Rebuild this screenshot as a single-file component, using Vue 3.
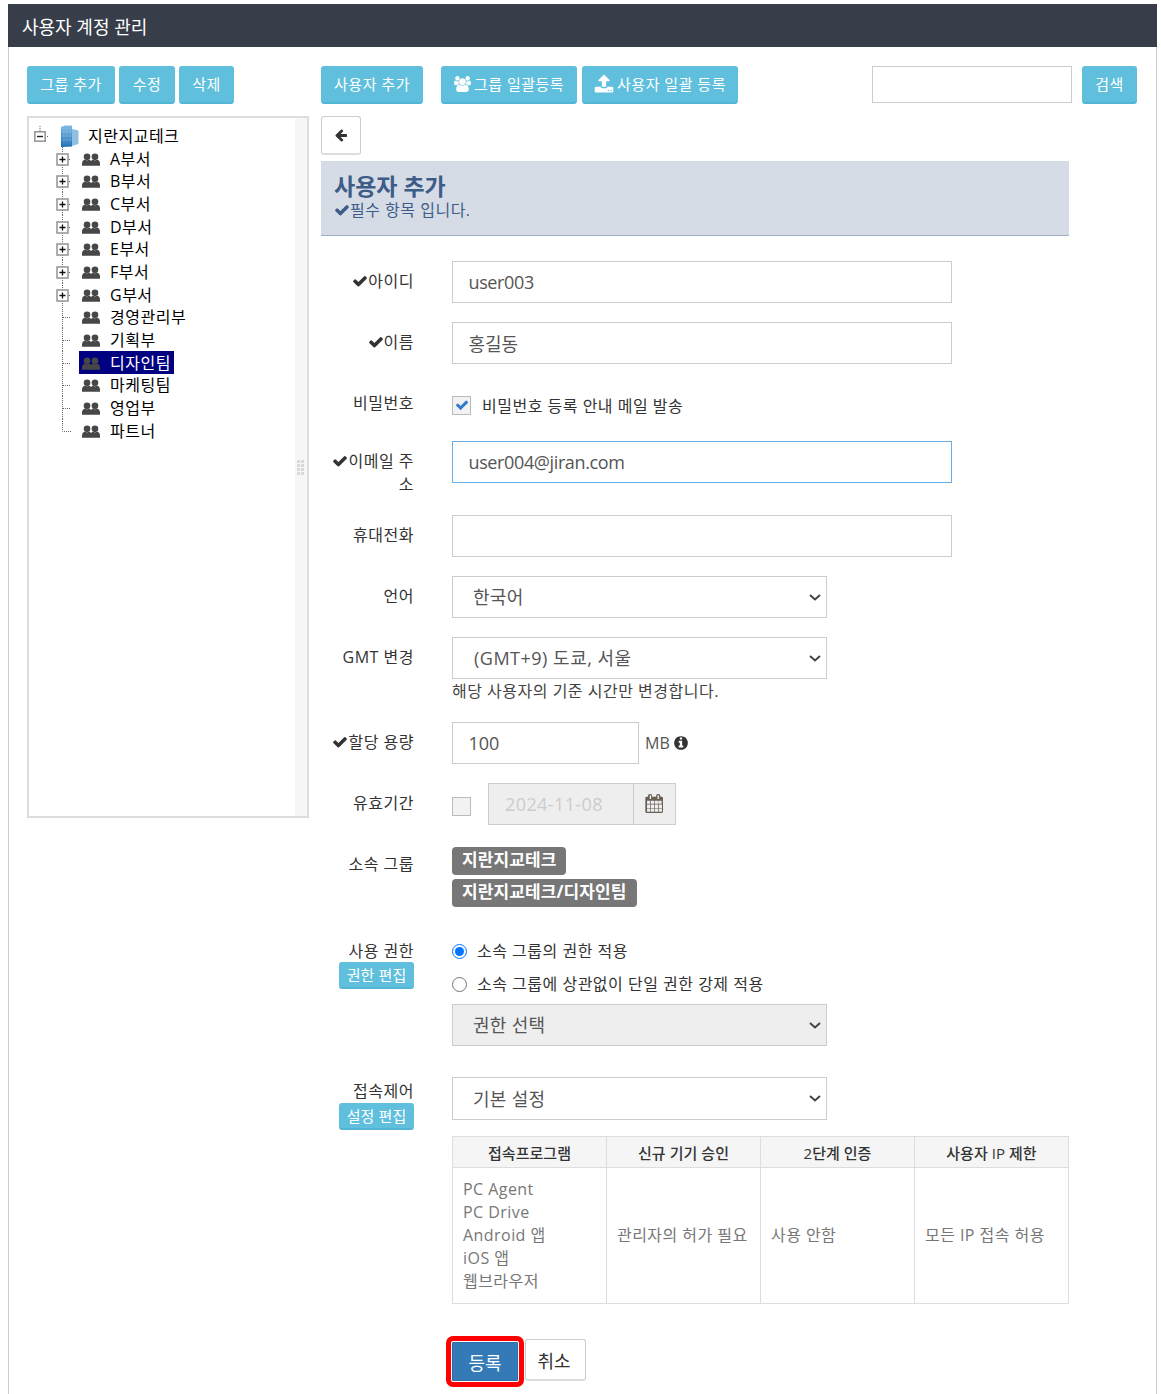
<script setup>
const depts = ['A부서','B부서','C부서','D부서','E부서','F부서','G부서','경영관리부','기획부','디자인팀','마케팅팀','영업부','파트너'].map((name, i) => ({
  name,
  branch: i < 7,
  selected: name === '디자인팀',
  last: name === '파트너'
}))
const check = 'M1671 566q0 40-28 68l-724 724-136 136q-28 28-68 28t-68-28l-136-136-362-362q-28-28-28-68t28-68l136-136q28-28 68-28t68 28l294 295 656-657q28-28 68-28t68 28l136 136q28 28 28 68z'
const users = 'M593 896q-162 5-265 128h-134q-82 0-138-40.5t-56-118.5q0-353 124-353 6 0 43.5 21t97.5 42.5 119 21.5q67 0 133-23-5 37-5 66 0 139 81 256zm1071 637q0 120-73 189.5t-194 69.5h-874q-121 0-194-69.5t-73-189.5q0-53 3.5-103.5t14-109 26.5-108.5 43-97.5 62-81 85.5-53.5 111.5-20q10 0 43 21.5t73 48 107 48 135 21.5 135-21.5 107-48 73-48 43-21.5q61 0 111.5 20t85.5 53.5 62 81 43 97.5 26.5 108.5 14 109 3.5 103.5zm-1024-1277q0 106-75 181t-181 75-181-75-75-181 75-181 181-75 181 75 75 181zm704 384q0 159-112.5 271.5t-271.5 112.5-271.5-112.5-112.5-271.5 112.5-271.5 271.5-112.5 271.5 112.5 112.5 271.5zm576 225q0 78-56 118.5t-138 40.5h-134q-103-123-265-128 81-117 81-256 0-29-5-66 66 23 133 23 59 0 119-21.5t97.5-42.5 43.5-21q124 0 124 353zm-128-609q0 106-75 181t-181 75-181-75-75-181 75-181 181-75 181 75 75 181z'
const upload = 'M1344 1472q0-26-19-45t-45-19-45 19-19 45 19 45 45 19 45-19 19-45zm256 0q0-26-19-45t-45-19-45 19-19 45 19 45 45 19 45-19 19-45zm128-224v320q0 40-28 68t-68 28h-1472q-40 0-68-28t-28-68v-320q0-40 28-68t68-28h427q21 56 70.5 92t110.5 36h256q61 0 110.5-36t70.5-92h427q40 0 68 28t28 68zm-325-648q-17 40-59 40h-256v448q0 26-19 45t-45 19h-256q-26 0-45-19t-19-45v-448h-256q-42 0-59-40-17-39 14-69l448-448q18-19 45-19t45 19l448 448q31 30 14 69z'
const arrow = 'M1664 896v128q0 53-32.5 90.5t-84.5 37.5h-704l293 294q38 36 38 90t-38 90l-75 76q-37 37-90 37-52 0-91-37l-651-652q-37-37-37-90 0-52 37-91l651-650q38-38 91-38 52 0 90 38l75 74q38 38 38 91t-38 91l-293 293h704q52 0 84.5 37.5t32.5 90.5z'
const info = 'M1152 1376v-160q0-14-9-23t-23-9h-96v-512q0-14-9-23t-23-9h-320q-14 0-23 9t-9 23v160q0 14 9 23t23 9h96v320h-96q-14 0-23 9t-9 23v160q0 14 9 23t23 9h448q14 0 23-9t9-23zm-128-896v-160q0-14-9-23t-23-9h-192q-14 0-23 9t-9 23v160q0 14 9 23t23 9h192q14 0 23-9t9-23zm640 416q0 209-103 385.5t-279.5 279.5-385.5 103-385.5-103-279.5-279.5-103-385.5 103-385.5 279.5-279.5 385.5-103 385.5 103 279.5 279.5 103 385.5z'
const calendar = 'M192 1664h288v-288h-288v288zm352 0h320v-288h-320v288zm-352-352h288v-320h-288v320zm352 0h320v-320h-320v320zm-352-384h288v-288h-288v288zm736 736h320v-288h-320v288zm-384-736h320v-288h-320v288zm768 736h288v-288h-288v288zm-384-352h320v-320h-320v320zm-352-864v-288q0-13-9.5-22.5t-22.5-9.5h-64q-13 0-22.5 9.5t-9.5 22.5v288q0 13 9.5 22.5t22.5 9.5h64q13 0 22.5-9.5t9.5-22.5zm736 864h288v-320h-288v320zm-384-384h320v-288h-320v288zm352 0h288v-288h-288v288zm32-480v-288q0-13-9.5-22.5t-22.5-9.5h-64q-13 0-22.5 9.5t-9.5 22.5v288q0 13 9.5 22.5t22.5 9.5h64q13 0 22.5-9.5t9.5-22.5zm384-64v1280q0 52-38 90t-90 38h-1408q-52 0-90-38t-38-90v-1280q0-52 38-90t90-38h128v-96q0-66 47-113t113-47h64q66 0 113 47t47 113v96h384v-96q0-66 47-113t113-47h64q66 0 113 47t47 113v96h128q52 0 90 38t38 90z'
const programs = ['PC Agent', 'PC Drive', 'Android 앱', 'iOS 앱', '웹브라우저']
</script>

<template>
  <div class="page">
    <div class="panel">
      <h1 class="title">사용자 계정 관리</h1>
      <div class="body">
        <div class="toolbar">
          <div class="tools-left">
            <button class="btn info w88">그룹 추가</button>
            <button class="btn info w56">수정</button>
            <button class="btn info w55">삭제</button>
          </div>
          <button class="btn info w102">사용자 추가</button>
          <button class="btn info w136 push-a">
            <svg class="ic-users" viewBox="0 0 1920 1792"><path :d="users" fill="#fff" /></svg>그룹 일괄등록
          </button>
          <button class="btn info w156 push-b">
            <svg class="ic-upload" viewBox="0 0 1792 1792"><path :d="upload" fill="#fff" /></svg>사용자 일괄 등록
          </button>
          <input class="search" type="text" />
          <button class="btn info w55 push-c">검색</button>
        </div>

        <div class="columns">
          <aside class="tree">
            <div class="tree-list">
              <div class="root-row">
                <svg class="twist-root" width="16" height="23" viewBox="0 0 16 23">
                  <path d="M6 2V7M13 12.5H15" stroke="#666" stroke-dasharray="1 1" fill="none" />
                  <rect x="0.8" y="7.8" width="10.4" height="9.4" fill="#fff" stroke="#999" stroke-width="1.6" />
                  <path d="M3 12.5H9" stroke="#222" stroke-width="1.4" />
                </svg>
                <svg class="building" width="18" height="22" viewBox="0 0 18 22">
                  <defs>
                    <linearGradient id="bld" x1="0" y1="0" x2="0" y2="1">
                      <stop offset="0" stop-color="#7cbbe6" />
                      <stop offset="1" stop-color="#1a6cb5" />
                    </linearGradient>
                  </defs>
                  <path d="M0 2 L4 0.5 H11 V21.5 L0 22 Z" fill="url(#bld)" />
                  <path d="M11 4 L17.5 5.5 V19 L11 21 Z" fill="#8fc0e3" />
                  <path d="M3 3V20M6 3V20M9 3V20M1 7H11M1 11H11M1 15H11" stroke="#ffffff" stroke-opacity=".25" stroke-width=".7" />
                </svg>
                <span class="root-name">지란지교테크</span>
              </div>
              <div v-for="d in depts" :key="d.name" class="tree-row">
                <svg class="twist" width="16" height="23" viewBox="0 0 16 23">
                  <path :d="d.last ? 'M6.5 0V12.5H15' : 'M6.5 0V23M7 12.5H15'" stroke="#666" stroke-dasharray="1 1" fill="none" />
                  <template v-if="d.branch">
                    <rect x="1" y="7" width="11" height="11" fill="#fff" stroke="#999" stroke-width="1.6" />
                    <path d="M3.5 12.5H9.5M6.5 9.5V15.5" stroke="#111" stroke-width="1.3" />
                  </template>
                </svg>
                <span class="node" :class="{ selected: d.selected }">
                  <svg class="ic-dept" viewBox="0 0 20 14">
                    <circle cx="5.6" cy="4" r="3.7" fill="#474747" />
                    <circle cx="14.4" cy="4" r="3.7" fill="#474747" />
                    <path d="M0 14 V11.5 C0 9 1.5 7.5 3.6 7 L5.6 8 L7.6 7 C8.8 7.3 9.6 8 10 8.8 C10.4 8 11.2 7.3 12.4 7 L14.4 8 L16.4 7 C18.5 7.5 20 9 20 11.5 V14 Z" fill="#474747" />
                  </svg>
                  <span class="node-name">{{ d.name }}</span>
                </span>
              </div>
            </div>
            <div class="splitter"><span v-for="n in 8" :key="n" class="dot"></span></div>
          </aside>

          <main class="content">
            <button class="btn back">
              <svg width="14" height="14" viewBox="0 0 1792 1792"><path :d="arrow" fill="#333" /></svg>
            </button>
            <div class="form-head">
              <h2>사용자 추가</h2>
              <p><svg class="ic-check" viewBox="0 0 1792 1792"><path :d="check" fill="#3d5c87" /></svg>필수 항목 입니다.</p>
            </div>

            <form class="form" @submit.prevent>
              <div class="row">
                <label class="label"><svg class="ic-check" viewBox="0 0 1792 1792"><path :d="check" fill="#333" /></svg>아이디</label>
                <input class="input w500 latin" type="text" value="user003" />
              </div>
              <div class="row">
                <label class="label"><svg class="ic-check" viewBox="0 0 1792 1792"><path :d="check" fill="#333" /></svg>이름</label>
                <input class="input w500" type="text" value="홍길동" />
              </div>
              <div class="row">
                <label class="label">비밀번호</label>
                <div class="pw-field">
                  <span class="cbox">
                    <svg width="14" height="14" viewBox="0 0 1792 1792"><path :d="check" fill="#2f7ad1" /></svg>
                  </span>
                  <span class="pw-text">비밀번호 등록 안내 메일 발송</span>
                </div>
              </div>
              <div class="row">
                <label class="label"><svg class="ic-check" viewBox="0 0 1792 1792"><path :d="check" fill="#333" /></svg>이메일 주소</label>
                <input class="input w500 focus latin" type="text" value="user004@jiran.com" />
              </div>
              <div class="row">
                <label class="label">휴대전화</label>
                <input class="input w500" type="text" />
              </div>
              <div class="row">
                <label class="label">언어</label>
                <select class="select"><option>한국어</option></select>
              </div>
              <div class="row">
                <label class="label">GMT 변경</label>
                <div>
                  <select class="select wide"><option>(GMT+9) 도쿄, 서울</option></select>
                  <div class="help">해당 사용자의 기준 시간만 변경합니다.</div>
                </div>
              </div>
              <div class="row">
                <label class="label"><svg class="ic-check" viewBox="0 0 1792 1792"><path :d="check" fill="#333" /></svg>할당 용량</label>
                <div class="quota">
                  <input class="input w187" type="text" value="100" />
                  <span class="unit">MB</span>
                  <svg class="ic-info" viewBox="0 0 1792 1792"><path :d="info" fill="#333" /></svg>
                </div>
              </div>
              <div class="row">
                <label class="label">유효기간</label>
                <div class="expiry">
                  <span class="cbox off"></span>
                  <div class="date">
                    <input class="date-input" type="text" value="2024-11-08" disabled />
                    <span class="date-addon"><svg width="19" height="19" viewBox="0 0 1792 1792"><path :d="calendar" fill="#6a5f55" /></svg></span>
                  </div>
                </div>
              </div>
              <div class="row group-row">
                <label class="label">소속 그룹</label>
                <div class="badges">
                  <span class="badge">지란지교테크</span>
                  <span class="badge">지란지교테크/디자인팀</span>
                </div>
              </div>
              <div class="row perm-row">
                <div class="label-stack">
                  <label class="label low">사용 권한</label>
                  <button class="btn info mini up">권한 편집</button>
                </div>
                <div class="perm">
                  <label class="radio"><input type="radio" name="perm" checked /><span>소속 그룹의 권한 적용</span></label>
                  <label class="radio"><input type="radio" name="perm" /><span>소속 그룹에 상관없이 단일 권한 강제 적용</span></label>
                  <select class="select disabled" disabled><option>권한 선택</option></select>
                </div>
              </div>
              <div class="row access-row">
                <div class="label-stack">
                  <label class="label tight">접속제어</label>
                  <button class="btn info mini">설정 편집</button>
                </div>
                <select class="select tall"><option>기본 설정</option></select>
              </div>
              <div class="table-wrap">
                <table class="policy">
                  <thead>
                    <tr>
                      <th>접속프로그램</th><th>신규 기기 승인</th><th>2단계 인증</th><th>사용자 IP 제한</th>
                    </tr>
                  </thead>
                  <tbody>
                    <tr>
                      <td><div v-for="p in programs" :key="p">{{ p }}</div></td>
                      <td>관리자의 허가 필요</td>
                      <td>사용 안함</td>
                      <td>모든 IP 접속 허용</td>
                    </tr>
                  </tbody>
                </table>
              </div>
              <div class="actions">
                <button class="btn submit">등록</button>
                <button class="btn cancel">취소</button>
              </div>
            </form>
          </main>
        </div>
      </div>
    </div>
  </div>
</template>

<style>
html, body { margin: 0; background: #fff; overflow: hidden; }
</style>

<style scoped>
.page {
  padding: 4px 4px 0 8px;
  font-family: "Open Sans", "Noto Sans CJK KR", sans-serif;
  font-size: 16px;
  letter-spacing: .5px;
  color: #333;
}
.panel {
  border-left: 1px solid #ccc;
  border-right: 1px solid #ccc;
  height: 1390px;
  box-sizing: border-box;
}
.title {
  margin: 0 -1px;
  box-sizing: border-box;
  height: 43px;
  background: #373e4a;
  color: #fff;
  font-size: 18px;
  font-weight: 400;
  letter-spacing: 0;
  line-height: 43px;
  padding: 2px 0 0 14px;
}
.body { padding: 19px 19px 0 18px; }
.toolbar { display: flex; align-items: flex-start; height: 38px; }
.tools-left { display: flex; gap: 4px; width: 294px; flex: none; }
.btn {
  font: inherit;
  box-sizing: border-box;
  height: 38px;
  border-radius: 3px;
  border: 1px solid transparent;
  padding: 0;
  display: inline-flex;
  align-items: center;
  justify-content: center;
  white-space: nowrap;
  flex: none;
}
.info {
  background: #5fbfdc;
  color: #fff;
  border-color: #5fbfdc;
  border-bottom: 2px solid #52b5d4;
  font-size: 15px;
  letter-spacing: .5px;
  padding-bottom: 2px;
}
.w88 { width: 88px; }
.w56 { width: 56px; }
.w55 { width: 55px; }
.w102 { width: 102px; }
.w136 { width: 136px; }
.w156 { width: 156px; }
.push-a { margin-left: 18px; }
.push-b { margin-left: 5px; }
.push-c { margin-left: 10px; }
.ic-users { width: 17px; height: 16px; margin-right: 3px; }
.ic-upload { width: 20px; height: 20px; margin-right: 3px; }
.search {
  box-sizing: border-box;
  width: 200px;
  height: 37px;
  margin-left: auto;
  border: 1px solid #ccc;
  background: #fff;
  outline: none;
}
.columns { display: flex; gap: 12px; margin-top: 12px; align-items: flex-start; }
.tree {
  box-sizing: border-box;
  width: 282px;
  height: 702px;
  flex: none;
  border: 2px solid #ddd;
  display: flex;
  background: #fff;
}
.tree-list { flex: 1; padding-top: 6px; color: #000; }
.root-row { display: flex; align-items: center; height: 23px; padding-left: 5px; }
.twist-root { flex: none; }
.building { margin-left: 11px; flex: none; }
.root-name { margin-left: 9px; margin-top: -2px; }
.tree-row { display: flex; align-items: center; height: 22.67px; padding-left: 27px; }
.twist { flex: none; overflow: visible; }
.node {
  margin-left: 7px;
  height: 22.67px;
  padding: 0 3px;
  display: inline-flex;
  align-items: center;
  gap: 10px;
}
.node-name { margin-top: -1px; }
.node.selected { background: #000080; color: #fff; }
.ic-dept { width: 18px; height: 13px; flex: none; margin-top: 2px; }
.splitter {
  width: 12px;
  background: #f7f7f7;
  display: grid;
  grid-template-columns: 3px 3px;
  grid-auto-rows: 3px;
  column-gap: 1px;
  row-gap: 1px;
  align-content: center;
  padding-left: 2px;
  box-sizing: border-box;
}
.dot { background: #d9d9d9; }
.content { width: 748px; flex: none; }
.back {
  width: 40px;
  height: 39px;
  background: #fff;
  border: 1px solid #ccc;
  border-bottom: 2px solid #ddd;
  margin-bottom: 6px;
  display: flex;
}
.form-head {
  box-sizing: border-box;
  height: 75px;
  background: #d6dce6;
  border-bottom: 1px solid #9db0c6;
  padding: 11px 13px 0;
  color: #3d5c87;
}
.form-head h2 { margin: 0; font-size: 23px; font-weight: 700; line-height: 28px; letter-spacing: 0; }
.form-head p { margin: 0; font-size: 16px; line-height: 20px; }
.ic-check { width: 16px; height: 16px; vertical-align: -2px; }
.form { margin-top: 25px; }
.row { display: flex; gap: 38px; margin-bottom: 19px; align-items: flex-start; }
.label {
  width: 93px;
  flex: none;
  box-sizing: border-box;
  padding-top: 9px;
  text-align: right;
  line-height: 23px;
}
.label.tight { padding-top: 3px; }
.label.low { padding-top: 10px; }
.input {
  box-sizing: border-box;
  height: 42px;
  border: 1px solid #ccc;
  padding: 0 15.5px;
  font: inherit;
  font-size: 18px;
  letter-spacing: 0;
  color: #555;
  outline: none;
  background: #fff;
}
.latin { letter-spacing: -.38px; }
.w500 { width: 500px; }
.w187 { width: 187px; }
.focus { border-color: #66afe9; }
.pw-field { display: flex; align-items: center; height: 39px; padding-top: 5px; box-sizing: border-box; }
.pw-text { margin-left: 11px; }
.cbox {
  box-sizing: border-box;
  width: 19px;
  height: 19px;
  flex: none;
  background: #f2f2f2;
  border: 1px solid #bbb;
  display: inline-flex;
  align-items: center;
  justify-content: center;
}
.select {
  box-sizing: border-box;
  width: 375px;
  height: 42px;
  border: 1px solid #ccc;
  border-radius: 0;
  background-color: #fff;
  background-image: url("data:image/svg+xml,%3Csvg xmlns='http://www.w3.org/2000/svg' width='12' height='7' viewBox='0 0 12 7'%3E%3Cpath d='M1 1l5 4.5L11 1' fill='none' stroke='%23444' stroke-width='2'/%3E%3C/svg%3E");
  background-repeat: no-repeat;
  background-position: right 5px center;
  appearance: none;
  padding: 0 20px;
  font: inherit;
  font-size: 18px;
  letter-spacing: .3px;
  color: #555;
  display: block;
  outline: none;
}
.select.wide { letter-spacing: .5px; padding-left: 21px; }
.select.tall { height: 43px; }
.select.disabled { background-color: #eee; color: #555; opacity: 1; }
.help { line-height: 24px; color: #444; }
.quota { display: flex; align-items: center; height: 42px; }
.unit { margin-left: 6px; color: #555; letter-spacing: 0; }
.ic-info { width: 16px; height: 16px; margin-left: 3px; }
.expiry { display: flex; align-items: flex-start; }
.expiry .cbox { margin-top: 14px; }
.date { display: flex; margin-left: 17px; height: 42px; }
.date-input {
  box-sizing: border-box;
  width: 146px;
  height: 42px;
  border: 1px solid #ccc;
  background: #eee;
  padding: 0 16px;
  font: inherit;
  font-size: 18px;
  letter-spacing: .4px;
  color: #ccc;
  -webkit-text-fill-color: #ccc;
  opacity: 1;
}
.date-addon {
  box-sizing: border-box;
  width: 42px;
  height: 42px;
  border: 1px solid #ccc;
  border-left: 0;
  background: #eee;
  display: flex;
  align-items: center;
  justify-content: center;
  padding-bottom: 2px;
}
.group-row { margin-bottom: 23px; }
.badges { padding-top: 3px; display: flex; flex-direction: column; align-items: flex-start; gap: 4px; }
.badge {
  box-sizing: border-box;
  height: 28px;
  line-height: 26px;
  background: #777;
  color: #fff;
  font-weight: 700;
  border-radius: 4px;
  padding: 0 10px;
  font-size: 17px;
  letter-spacing: .1px;
}
.label-stack { width: 93px; flex: none; display: flex; flex-direction: column; align-items: flex-end; }
.mini { width: 75px; height: 27px; font-size: 15px; letter-spacing: .1px; padding-bottom: 1px; }
.mini.up { margin-top: -1px; }
.perm { padding-top: 3px; }
.radio { display: flex; align-items: center; height: 33px; }
.radio input { margin: 4px 10px 0 0; width: 15px; height: 15px; accent-color: #0075ff; }
.perm .select { margin-top: 5px; }
.perm-row { margin-bottom: 31px; }
.access-row { margin-bottom: 16px; height: 43px; }
.table-wrap { margin-left: 131px; }
.policy { border-collapse: collapse; width: 617px; table-layout: fixed; }
.policy th, .policy td { border: 1px solid #ddd; font-size: 16px; }
.policy th { height: 30px; padding: 0; background: #f5f5f5; font-weight: 500; font-size: 15px; letter-spacing: .05px; }
.policy td { height: 135px; padding: 0 10px; color: #777; line-height: 23px; letter-spacing: .45px; }
.actions { display: flex; margin: 35px 0 0 131px; align-items: flex-start; }
.submit {
  width: 66px;
  height: 39px;
  margin-top: 3px;
  background: #337ab7;
  color: #fff;
  font-size: 18px;
  border-color: #2e6da4;
  outline: 5px solid #f00;
  outline-offset: 1px;
  border-radius: 1px;
  letter-spacing: 0;
}
.cancel {
  width: 61px;
  height: 42px;
  margin-left: 7px;
  padding-right: 3px;
  background: #fff;
  border: 1px solid #ccc;
  border-bottom: 2px solid #ddd;
  font-size: 18px;
  letter-spacing: 0;
  color: #333;
}
</style>
